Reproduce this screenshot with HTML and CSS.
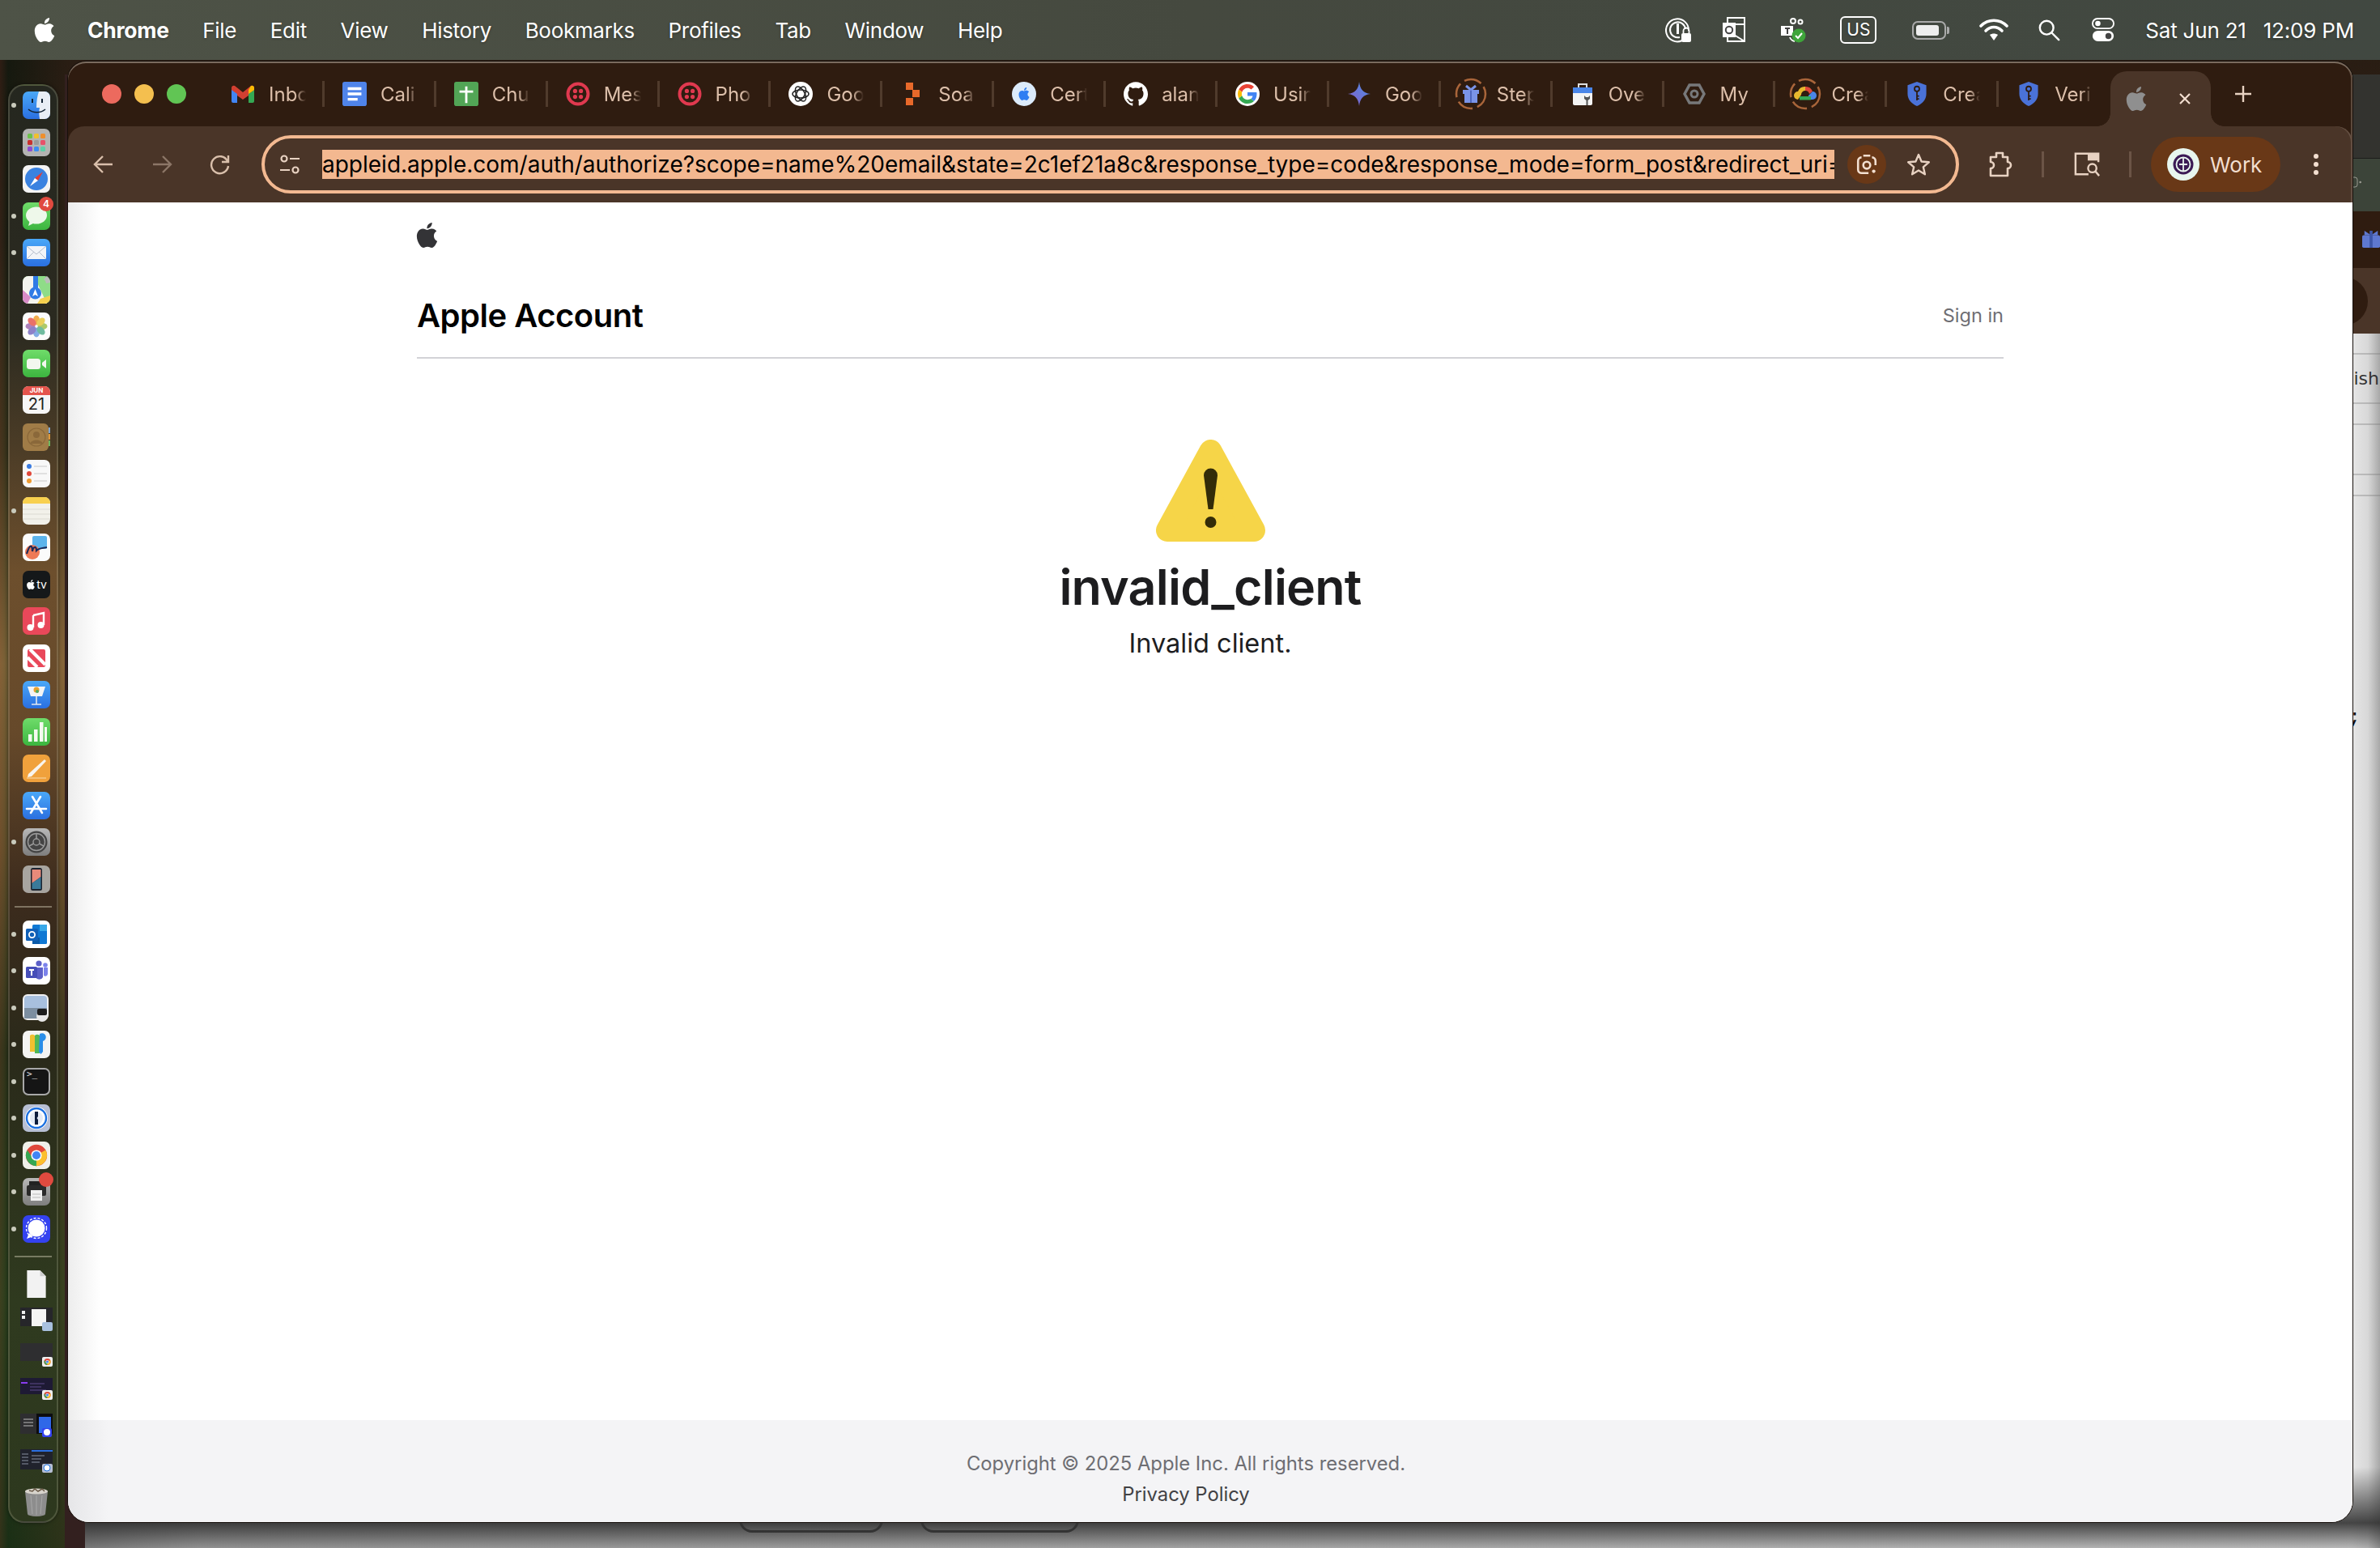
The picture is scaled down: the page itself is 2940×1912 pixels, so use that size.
FILE: index.html
```html
<!DOCTYPE html>
<html lang="en">
<head>
    <meta charset="UTF-8">
    <meta name="viewport" content="width=device-width, initial-scale=1.0">
    <link rel="stylesheet" href="styles.css">
    <title>Apple Account - invalid_client</title>
</head>
<body>

<svg class="defs" width="0" height="0">
    <defs>
        <linearGradient id="blueGrad" x1="0" y1="0" x2="0" y2="1"><stop offset="0" stop-color="#4aa8f8"/><stop offset="1" stop-color="#2a6fe0"/></linearGradient>
        <linearGradient id="greenGrad" x1="0" y1="0" x2="0" y2="1"><stop offset="0" stop-color="#6fdc6a"/><stop offset="1" stop-color="#3cb53f"/></linearGradient>
        <linearGradient id="grayGrad" x1="0" y1="0" x2="0" y2="1"><stop offset="0" stop-color="#b8b8b8"/><stop offset="1" stop-color="#7e7e7e"/></linearGradient>
        <linearGradient id="sparkGrad" x1="0" y1="1" x2="1" y2="0"><stop offset="0" stop-color="#8a5cc8"/><stop offset="1" stop-color="#4a90e8"/></linearGradient>
        <symbol id="apple" viewBox="0 0 24 24"><path d="M12.152 6.896c-.948 0-2.415-1.078-3.96-1.04-2.04.027-3.91 1.183-4.961 3.014-2.117 3.675-.546 9.103 1.519 12.09 1.013 1.454 2.208 3.09 3.792 3.039 1.52-.065 2.09-.987 3.935-.987 1.831 0 2.35.987 3.96.948 1.637-.026 2.676-1.48 3.676-2.948 1.156-1.688 1.636-3.325 1.662-3.415-.039-.013-3.182-1.221-3.22-4.857-.026-3.04 2.48-4.494 2.597-4.559-1.429-2.09-3.623-2.324-4.39-2.376-2-.156-3.675 1.09-4.61 1.09zM15.53 3.83c.843-1.012 1.4-2.427 1.245-3.83-1.207.052-2.662.805-3.532 1.818-.78.896-1.454 2.338-1.273 3.714 1.338.104 2.715-.688 3.559-1.701"/></symbol>
        <symbol id="chromeLogo" viewBox="0 0 34 34"><circle cx="17" cy="17" r="14" fill="#e0483b"/><path d="M17 17 L5 24 A14 14 0 0 0 17 31 Z" fill="#34a853"/><path d="M17 17 L17 31 A14 14 0 0 0 29 10 Z" fill="#fbc02d"/><path d="M17 17 L5 24 A14 14 0 0 1 5 10 L11 19Z" fill="#34a853"/><circle cx="17" cy="17" r="7" fill="#fff"/><circle cx="17" cy="17" r="5.4" fill="#4285f4"/></symbol>
        <symbol id="twilio" viewBox="0 0 30 30"><circle cx="15" cy="15" r="12.5" fill="none" stroke="#e0394f" stroke-width="4"/><g fill="#e0394f"><circle cx="11.4" cy="11.4" r="2.6"/><circle cx="18.6" cy="11.4" r="2.6"/><circle cx="11.4" cy="18.6" r="2.6"/><circle cx="18.6" cy="18.6" r="2.6"/></g></symbol>
        <symbol id="shield" viewBox="0 0 30 36"><path d="M15 1 L28 6 V18 C28 26 22 32 15 35 C8 32 2 26 2 18 V6 Z" fill="#4a72d8"/><circle cx="15" cy="11" r="3.4" fill="none" stroke="#2f1c10" stroke-width="2"/><path d="M15 14 V27 M15 21 h3 M15 25 h3" stroke="#2f1c10" stroke-width="2" fill="none"/></symbol>
        <symbol id="ring" viewBox="0 0 40 40"><circle cx="20" cy="20" r="18" fill="none" stroke="#a9653a" stroke-width="2.6" stroke-dasharray="20 6 20 6 18 6 22 5"/></symbol>
    </defs>
</svg>

<div class="menubar">
    <div class="menu-left">
        <svg class="menu-apple" viewBox="0 0 24 24" fill="#fff"><use href="#apple"/></svg>
        <span class="menu-item app-name">Chrome</span>
        <span class="menu-item">File</span>
        <span class="menu-item">Edit</span>
        <span class="menu-item">View</span>
        <span class="menu-item">History</span>
        <span class="menu-item">Bookmarks</span>
        <span class="menu-item">Profiles</span>
        <span class="menu-item">Tab</span>
        <span class="menu-item">Window</span>
        <span class="menu-item">Help</span>
    </div>
    <div class="menu-right">
        <svg class="extra extra-lock" viewBox="0 0 34 34" fill="none" stroke="#fff" stroke-width="2"><path d="M21 30 A14 14 0 1 1 29 18"/><path d="M18 26 A9.5 9.5 0 1 1 25 16"/><path d="M15.500 9 V22" stroke-width="3"/><rect x="20" y="21" width="12" height="11" rx="2" fill="#fff" stroke="none"/><path d="M22.500 21 v-3 a3.500 3.500 0 0 1 7 0 v3" stroke-width="1.800"/></svg>
        <svg class="extra" viewBox="0 0 34 34" fill="none" stroke="#fff" stroke-width="2"><rect x="9" y="2" width="21" height="29" /><path d="M9 10 h21 M9 18 L30 31"/><rect x="3" y="8" width="16" height="18" fill="#fff" stroke="none"/><circle cx="11" cy="17" r="4.200" stroke="#444"/></svg>
        <svg class="extra extra-teams" viewBox="0 0 34 34"><circle cx="18" cy="6" r="3" fill="none" stroke="#fff" stroke-width="2"/><circle cx="27" cy="7" r="2.500" fill="none" stroke="#fff" stroke-width="2"/><path d="M3 12 H18 V24 H3Z" fill="#fff"/><path d="M8 15 h6 M11 15 v7" stroke="#444" stroke-width="2"/><path d="M14 26 a8 8 0 0 0 6 5" stroke="#fff" stroke-width="2" fill="none"/><circle cx="25" cy="24" r="8.500" fill="#3ea53a"/><path d="M21 24 l3 3 l5-6" stroke="#fff" stroke-width="2" fill="none"/></svg>
        <span class="kbd-box">US</span>
        <div class="battery"><span class="battery-level"></span></div>
        <svg class="extra wifi" viewBox="0 0 36 30" fill="none" stroke="#fff" stroke-width="3.600" stroke-linecap="round"><path d="M2 10 C11 1 25 1 34 10"/><path d="M8 16 C14 10 22 10 28 16"/><path d="M18 28 L13 21 C16 19 20 19 23 21 Z" fill="#fff" stroke="none"/></svg>
        <svg class="extra search" viewBox="0 0 30 30" fill="none" stroke="#fff" stroke-width="2.600"><circle cx="12" cy="12" r="9"/><path d="M19 19 L28 28" stroke-linecap="round"/></svg>
        <svg class="extra control" viewBox="0 0 30 32"><rect x="1" y="1" width="28" height="13" rx="6.500" fill="none" stroke="#fff" stroke-width="2"/><circle cx="8" cy="7.500" r="3.500" fill="#fff"/><rect x="1" y="17" width="28" height="14" rx="7" fill="#fff"/><circle cx="22" cy="24" r="4" fill="#444"/></svg>
        <span class="clock"><span>Sat Jun 21</span><span>12:09 PM</span></span>
    </div>
</div>

<!-- dock -->
<div class="dock">
    <div class="dock-item on"><svg class="app" viewBox="0 0 34 34"><rect width="34" height="34" rx="7" fill="url(#blueGrad)"/><path d="M20 0 H27 A7 7 0 0 1 34 7 V27 A7 7 0 0 1 27 34 H21 C20 28 20 24 21 20 H17 C17 12 18 6 20 0Z" fill="#e9eef5"/><path d="M12 9 v5 M24 9 v5" stroke="#123" stroke-width="2"/><path d="M7 22 C13 27 22 27 28 22" fill="none" stroke="#123" stroke-width="1.500"/></svg></div>
    <div class="dock-item"><svg class="app" viewBox="0 0 34 34"><rect width="34" height="34" rx="7" fill="#b4b4b2"/><rect x="6" y="6" width="6" height="6" rx="1.500" fill="#6cc24a"/><rect x="14" y="6" width="6" height="6" rx="1.500" fill="#f0c02e"/><rect x="22" y="6" width="6" height="6" rx="1.500" fill="#ee8f2e"/><rect x="6" y="14" width="6" height="6" rx="1.500" fill="#c9302c"/><rect x="14" y="14" width="6" height="6" rx="1.500" fill="#9a9a9a"/><rect x="22" y="14" width="6" height="6" rx="1.500" fill="#e8506a"/><rect x="6" y="22" width="6" height="6" rx="1.500" fill="#8c4fd0"/><rect x="14" y="22" width="6" height="6" rx="1.500" fill="#3d8df0"/><rect x="22" y="22" width="6" height="6" rx="1.500" fill="#5ecfa8"/></svg></div>
    <div class="dock-item"><svg class="app" viewBox="0 0 34 34"><rect width="34" height="34" rx="7" fill="#f4f4f4"/><circle cx="17" cy="17" r="14" fill="#3a82e0"/><path d="M25 8 L15 16 L19 19Z" fill="#e63c32"/><path d="M9 26 L15 16 L19 19Z" fill="#fff"/></svg></div>
    <div class="dock-item on"><svg class="app" viewBox="0 0 34 34"><rect width="34" height="34" rx="7" fill="url(#greenGrad)"/><ellipse cx="17" cy="16" rx="13" ry="10.500" fill="#eef8ea"/><path d="M9 22 L7 29 L15 25Z" fill="#eef8ea"/></svg><span class="badge">4</span></div>
    <div class="dock-item on"><svg class="app" viewBox="0 0 34 34"><rect width="34" height="34" rx="7" fill="url(#blueGrad)"/><rect x="5" y="9" width="24" height="16" rx="1.500" fill="#f2f4f8"/><path d="M5 9 L17 19 L29 9 M5 25 L14 16 M29 25 L20 16" fill="none" stroke="#b4bccb" stroke-width="1"/></svg></div>
    <div class="dock-item"><svg class="app" viewBox="0 0 34 34"><rect width="34" height="34" rx="7" fill="#8fdc88"/><path d="M0 7 A7 7 0 0 1 7 0 H14 L30 34 H7 A7 7 0 0 1 0 27Z" fill="#f4f4ee"/><path d="M0 17 L10 26 L6 34 A7 7 0 0 1 0 27Z" fill="#d98bc8"/><path d="M22 28 L34 24 V27 A7 7 0 0 1 27 34 H18Z" fill="#f4cf4e"/><path d="M30 0 A10 10 0 0 1 34 8 L29 9 A6 6 0 0 0 26 4Z" fill="#bbb"/><rect x="13" y="0" width="6" height="18" fill="#2f7be6"/><circle cx="15.500" cy="21" r="7.500" fill="#2f7be6"/><path d="M15.500 16 L19 25 L15.500 23 L12 25Z" fill="#fff"/></svg></div>
    <div class="dock-item"><svg class="app" viewBox="0 0 34 34"><rect width="34" height="34" rx="7" fill="#fbfbfb"/><g opacity=".85"><ellipse cx="17" cy="9.500" rx="4" ry="6" fill="#f0a030"/><ellipse cx="17" cy="24.500" rx="4" ry="6" fill="#6e9fe0"/><ellipse cx="9.500" cy="17" rx="6" ry="4" fill="#a06cb0"/><ellipse cx="24.500" cy="17" rx="6" ry="4" fill="#a0c050"/><ellipse cx="11.500" cy="11.500" rx="4" ry="6" fill="#e85a50" transform="rotate(-45 11.500 11.500)"/><ellipse cx="22.500" cy="11.500" rx="4" ry="6" fill="#e8c840" transform="rotate(45 22.500 11.500)"/><ellipse cx="11.500" cy="22.500" rx="4" ry="6" fill="#7a6cc0" transform="rotate(45 11.500 22.500)"/><ellipse cx="22.500" cy="22.500" rx="4" ry="6" fill="#58b090" transform="rotate(-45 22.500 22.500)"/></g></svg></div>
    <div class="dock-item"><svg class="app" viewBox="0 0 34 34"><rect width="34" height="34" rx="7" fill="url(#greenGrad)"/><rect x="5" y="11" width="17" height="13" rx="3.500" fill="#f2f7ee"/><path d="M24 16 L29 12 V23 L24 19Z" fill="#f2f7ee"/></svg></div>
    <div class="dock-item"><div class="app cal"><span class="cal-month">JUN</span><span class="cal-day">21</span></div></div>
    <div class="dock-item"><svg class="app" viewBox="0 0 34 34"><rect width="32" height="34" rx="6" fill="#a07c47"/><rect x="32" y="5" width="2" height="7" fill="#7aa6d8"/><rect x="32" y="13" width="2" height="7" fill="#e09a3a"/><rect x="32" y="21" width="2" height="7" fill="#70b860"/><circle cx="17" cy="17" r="11" fill="none" stroke="#8a683a" stroke-width="1.200"/><circle cx="17" cy="14" r="4" fill="#8a683a"/><path d="M9 25 C11 19 23 19 25 25" fill="#8a683a"/></svg></div>
    <div class="dock-item"><svg class="app" viewBox="0 0 34 34"><rect width="34" height="34" rx="7" fill="#f8f8f8"/><circle cx="8" cy="8" r="3" fill="#3a7be0"/><circle cx="8" cy="17" r="3" fill="#e0483b"/><circle cx="8" cy="26" r="3" fill="#ee9a30"/><path d="M14 8 H30 M14 17 H30 M14 26 H30" stroke="#c8c8c8" stroke-width="1"/></svg></div>
    <div class="dock-item on notes-dot"><svg class="app" viewBox="0 0 34 34"><rect width="34" height="34" rx="7" fill="#f2f1ea"/><path d="M0 8 A7 7 0 0 1 7 0 H27 A7 7 0 0 1 34 8 Z" fill="#f8d04e"/><path d="M0 15 H34 M0 21 H34 M0 27 H34" stroke="#dcdbd3" stroke-width="1"/></svg></div>
    <div class="dock-item"><svg class="app" viewBox="0 0 34 34"><rect width="34" height="34" rx="7" fill="#fbfbfb"/><rect x="12" y="3" width="18" height="16" rx="2" fill="#5cb4ec"/><circle cx="12" cy="23" r="9" fill="#ee7a56"/><path d="M5 25 C9 12 12 14 12 22 C13 16 17 15 17 21 C20 18 24 18 30 17" fill="none" stroke="#1c2a58" stroke-width="2.200"/></svg></div>
    <div class="dock-item"><div class="app tv"><svg class="tv-logo" viewBox="0 0 24 24" fill="#fff"><use href="#apple"/></svg><span>tv</span></div></div>
    <div class="dock-item"><svg class="app" viewBox="0 0 34 34"><rect width="34" height="34" rx="7" fill="#e9485a"/><path d="M13 10 L26 7 V22" fill="none" stroke="#fff" stroke-width="2.400"/><path d="M13 10 V25" stroke="#fff" stroke-width="2.400"/><circle cx="9.500" cy="25" r="4" fill="#fff"/><circle cx="22.500" cy="22" r="4" fill="#fff"/></svg></div>
    <div class="dock-item"><svg class="app" viewBox="0 0 34 34"><rect width="34" height="34" rx="7" fill="#fff"/><rect x="6" y="6" width="22" height="22" rx="2" fill="#e9485a"/><path d="M9 6 L28 25 M6 16 L18 28" stroke="#fff" stroke-width="4"/></svg></div>
    <div class="dock-item"><svg class="app" viewBox="0 0 34 34"><rect width="34" height="34" rx="7" fill="url(#blueGrad)"/><path d="M6 7 H28 L24 19 H10Z" fill="#f4f4f4"/><circle cx="17" cy="11" r="3.500" fill="#e8a030"/><circle cx="18" cy="13" r="2" fill="#50a860"/><path d="M17 19 V29 M11 29 H23" stroke="#e4e8ee" stroke-width="1.600"/></svg></div>
    <div class="dock-item"><svg class="app" viewBox="0 0 34 34"><rect width="34" height="34" rx="7" fill="url(#greenGrad)"/><rect x="7" y="20" width="4.500" height="9" fill="#f4faf0"/><rect x="14" y="14" width="4.500" height="15" fill="#f4faf0"/><rect x="21" y="5" width="4.500" height="24" fill="#f4faf0"/><rect x="27" y="11" width="3" height="18" fill="#f4faf0"/></svg></div>
    <div class="dock-item"><svg class="app" viewBox="0 0 34 34"><rect width="34" height="34" rx="7" fill="#f0a13c"/><path d="M7 24 L27 6 L29 8 L11 27 L6 28Z" fill="#f8f4ee"/><path d="M5 29 H29" stroke="#f8dcb0" stroke-width="1"/></svg></div>
    <div class="dock-item"><svg class="app" viewBox="0 0 34 34"><rect width="34" height="34" rx="7" fill="url(#blueGrad)"/><path d="M12 6 L24 26 M22 6 L10 26 M5 21 H29" stroke="#fff" stroke-width="2.600" stroke-linecap="round"/></svg></div>
    <div class="dock-item on"><svg class="app" viewBox="0 0 34 34"><rect width="34" height="34" rx="7" fill="url(#grayGrad)"/><circle cx="17" cy="17" r="13.500" fill="#444"/><circle cx="17" cy="17" r="10.500" fill="none" stroke="#9a9a9a" stroke-width="1.400"/><circle cx="17" cy="17" r="4" fill="none" stroke="#9a9a9a" stroke-width="1.400"/><path d="M17 7 V13 M8 22 L13.500 19 M26 22 L20.500 19" stroke="#9a9a9a" stroke-width="1.600"/></svg></div>
    <div class="dock-item"><svg class="app" viewBox="0 0 34 34"><rect width="34" height="34" rx="7" fill="#a8a5a0"/><rect x="10" y="3" width="14" height="28" rx="2.500" fill="#1c2430"/><path d="M11.500 5 H22.500 V14 L11.500 22Z" fill="#e88a7a"/><path d="M22.500 14 V29 H11.500 V22Z" fill="#3a7a9a"/></svg></div>
    <div class="dock-sep"></div>
    <div class="dock-item on"><svg class="app" viewBox="0 0 34 34"><rect width="34" height="34" rx="7" fill="#fff"/><rect x="12" y="5" width="18" height="24" rx="1.500" fill="#0f78d4"/><rect x="21" y="5" width="9" height="8" fill="#38a8e8"/><rect x="12" y="21" width="9" height="8" fill="#0a5aa8"/><rect x="4" y="10" width="15" height="15" rx="1.500" fill="#1060b8"/><circle cx="11.500" cy="17.500" r="3.600" fill="none" stroke="#fff" stroke-width="1.800"/></svg></div>
    <div class="dock-item on"><svg class="app" viewBox="0 0 34 34"><rect width="34" height="34" rx="7" fill="#fff"/><circle cx="20" cy="8" r="3.600" fill="#5b5fc7"/><circle cx="28" cy="10" r="2.800" fill="#7b83eb"/><path d="M16 13 H25 V25 A5 5 0 0 1 16 25Z" fill="#5b5fc7"/><path d="M26 13 H31 V21 A3 3 0 0 1 26 23Z" fill="#7b83eb"/><rect x="4" y="12" width="14" height="14" rx="1.500" fill="#464eb8"/><path d="M8 16 H14 M11 16 V23" stroke="#fff" stroke-width="2"/></svg></div>
    <div class="dock-item on"><svg class="app" viewBox="0 0 34 34"><rect width="32" height="32" rx="6" fill="#f0f0f0"/><rect x="2" y="2" width="28" height="28" rx="4" fill="#a8c0de"/><rect x="2" y="17" width="28" height="13" fill="#7c8ea0"/><circle cx="24" cy="27" r="7" fill="#e8e8e8"/><rect x="18" y="18" width="12" height="8" rx="2" fill="#1c1c1c"/></svg></div>
    <div class="dock-item on"><svg class="app" viewBox="0 0 34 34"><rect width="34" height="34" rx="7" fill="#f4f4f2"/><path d="M9 6 a4 4 0 0 1 6 0 v20 h-6Z" fill="#f0c030"/><path d="M15 6 a4 4 0 0 1 6 0 v22 h-6Z" fill="#50b858"/><path d="M21 4 a5 5 0 1 1 4 9 v13 l-2.500 3 l-2.500 -3Z" fill="#2a8ee8"/></svg></div>
    <div class="dock-item on"><div class="app term"><span>&gt;_</span></div></div>
    <div class="dock-item on"><svg class="app" viewBox="0 0 34 34"><rect width="34" height="34" rx="7" fill="#b7bfd4"/><circle cx="17" cy="17" r="14" fill="#fff"/><circle cx="17" cy="17" r="12" fill="none" stroke="#1a6fe0" stroke-width="2.400"/><circle cx="17" cy="17" r="8" fill="#e4eaf4"/><path d="M15 9 H19 V15 L17.500 17 L19 19 V25 H15Z" fill="#0d1c3a"/></svg></div>
    <div class="dock-item on"><svg class="app" viewBox="0 0 34 34"><rect width="34" height="34" rx="7" fill="#f0f0ea"/><use href="#chromeLogo" x="1" y="1" width="32" height="32"/></svg></div>
    <div class="dock-item on"><svg class="app" viewBox="0 0 34 34"><rect width="34" height="34" rx="7" fill="url(#grayGrad)"/><rect x="8" y="4" width="18" height="6" fill="#222"/><rect x="5" y="9" width="24" height="13" rx="2" fill="#2a2a2a"/><rect x="10" y="15" width="14" height="13" fill="#f0f0f0"/><path d="M12 20 H22 M12 24 H22" stroke="#bbb"/></svg><span class="badge busy"></span></div>
    <div class="dock-item on"><svg class="app" viewBox="0 0 34 34"><rect width="34" height="34" rx="7" fill="#3442f0"/><circle cx="17" cy="16" r="10.500" fill="#fff"/><circle cx="17" cy="16" r="12.500" fill="none" stroke="#fff" stroke-width="1.400" stroke-dasharray="3 2"/><path d="M8 22 L5 29 L13 26Z" fill="#fff"/></svg></div>
    <div class="dock-sep"></div>
    <div class="dock-item"><svg class="app" viewBox="0 0 34 38"><path d="M4 0 H22 L30 8 V38 H4Z" fill="#f2f2f2"/><path d="M22 0 L30 8 H22Z" fill="#cfcfcf"/></svg></div>
    <div class="dock-item thumb"><svg class="app-wide" viewBox="0 0 40 30"><rect width="40" height="23" fill="#26262a"/><rect x="14" y="2" width="18" height="21" fill="#f4f4f4"/><rect x="2" y="4" width="4" height="4" fill="#eee"/><rect x="2" y="10" width="4" height="4" fill="#eee"/><rect x="27" y="18" width="13" height="11" rx="2" fill="#a8c0de"/></svg></div>
    <div class="dock-item thumb"><svg class="app-wide" viewBox="0 0 40 30"><rect width="40" height="22" fill="#2e2e30"/><rect x="27" y="17" width="13" height="12" rx="2" fill="#eee"/><use href="#chromeLogo" x="28" y="18" width="11" height="10"/></svg></div>
    <div class="dock-item thumb"><svg class="app-wide" viewBox="0 0 40 30"><rect width="40" height="20" fill="#1e1a34"/><rect x="1" y="5" width="8" height="2" fill="#8a3cf0"/><path d="M12 7 H30 M12 11 H26 M12 15 H32" stroke="#5c4a8a"/><rect x="27" y="15" width="13" height="12" rx="2" fill="#eee"/><use href="#chromeLogo" x="28" y="16" width="11" height="10"/></svg></div>
    <div class="dock-item thumb"><svg class="app-wide" viewBox="0 0 40 30"><rect width="20" height="25" fill="#2e2e30"/><rect x="20" width="20" height="25" fill="#0d0d10"/><rect x="23" y="4" width="15" height="20" fill="#2f68e8"/><path d="M4 7 H16 M4 11 H16 M4 15 H16" stroke="#bbb"/><rect x="27" y="18" width="12" height="11" rx="2" fill="#3442f0"/><circle cx="33" cy="23" r="4" fill="#fff"/></svg></div>
    <div class="dock-item thumb"><svg class="app-wide" viewBox="0 0 40 30"><rect width="40" height="25" fill="#20222c"/><rect x="14" y="1" width="26" height="2" fill="#2a6fe0"/><path d="M2 6 H10 M2 10 H10 M2 14 H10 M2 18 H10 M14 8 H30 M14 12 H26 M14 16 H24" stroke="#8890a0"/><rect x="27" y="18" width="13" height="11" rx="2" fill="#b7bfd4"/><circle cx="33" cy="23" r="4" fill="#fff" stroke="#1a6fe0"/></svg></div>
    <div class="dock-item"><svg class="app trash" viewBox="0 0 34 36"><path d="M3 5 L6 33 A11 3 0 0 0 28 33 L31 5Z" fill="#8d8d8d"/><ellipse cx="17" cy="5" rx="14" ry="3.500" fill="#d8d4cc"/><path d="M8 4 l4 1 l3-3 l4 3 l5-3 l3 3" stroke="#6a5a48" fill="none" stroke-width="1.500"/><path d="M10 10 L12 33 M17 10 V34 M24 10 L22 33" stroke="#a8a8a8"/></svg></div>
</div>

<!-- the window behind, only its edges show -->
<div class="back-window">
    <div class="back-band back-title"></div>
    <div class="back-band back-menu"><svg class="back-battery" viewBox="0 0 14 14" fill="none" stroke="#9a9a92"><path d="M1 1 H5 A3 3 0 0 1 8 4 V10 A3 3 0 0 1 5 13 H1"/><path d="M11 6 L13 7 L11 8Z" fill="#9a9a92"/></svg></div>
    <div class="back-band back-strip"><svg class="back-gift" viewBox="0 0 24 24" fill="#5e78d0"><rect x="0" y="6" width="24" height="17" rx="2"/><path d="M3 0 L12 6 L21 0 V6 H3Z"/><rect x="10" y="0" width="4" height="23" fill="#3d56a8"/></svg></div>
    <div class="back-band back-toolbar"><span class="back-pill"></span></div>
    <div class="back-page">
        <div class="back-row row-a"></div>
        <div class="back-row row-b">ish</div>
        <div class="back-row row-c"></div>
        <div class="back-row row-d"></div>
        <div class="back-row row-c"></div>
        <div class="back-row row-e">e;</div>
        <div class="back-button button-one"></div>
        <div class="back-button button-two"></div>
    </div>
</div>

<div class="window">
    <div class="tabstrip">
        <div class="lights">
            <span class="light red"></span>
            <span class="light yellow"></span>
            <span class="light green"></span>
        </div>
        <div class="tabs">
            <div class="tab"><svg class="fav" viewBox="0 0 30 24"><path d="M1 4 A3 3 0 0 1 5 2 L15 10 L25 2 A3 3 0 0 1 29 4 V9 L15 19 L1 9Z" fill="#d23f31"/><path d="M1 7 V21 A2 2 0 0 0 3 23 H8 V12Z" fill="#4285f4"/><path d="M29 7 V21 A2 2 0 0 1 27 23 H22 V12Z" fill="#34a853"/><path d="M22 7 L25 2 A3 3 0 0 1 29 4 V7 L22 12Z" fill="#fbbc04"/></svg><span class="tab-label">Inbo</span></div>
            <div class="tab"><svg class="fav" viewBox="0 0 32 32"><rect width="32" height="32" rx="3" fill="#4f84ea"/><path d="M7 9 H25 M7 16 H25 M7 23 H20" stroke="#fff" stroke-width="3.600"/></svg><span class="tab-label">Cali</span></div>
            <div class="tab"><svg class="fav" viewBox="0 0 32 32"><rect width="32" height="32" rx="3" fill="#52a556"/><path d="M16 6 V28 M7 13 H25" stroke="#fff" stroke-width="3"/></svg><span class="tab-label">Chu</span></div>
            <div class="tab"><svg class="fav"><use href="#twilio"/></svg><span class="tab-label">Mes</span></div>
            <div class="tab"><svg class="fav"><use href="#twilio"/></svg><span class="tab-label">Pho</span></div>
            <div class="tab"><svg class="fav" viewBox="0 0 30 30"><circle cx="15" cy="15" r="15" fill="#fff"/><g fill="none" stroke="#222" stroke-width="1.500"><ellipse cx="15" cy="15" rx="10" ry="5"/><ellipse cx="15" cy="15" rx="10" ry="5" transform="rotate(60 15 15)"/><ellipse cx="15" cy="15" rx="10" ry="5" transform="rotate(120 15 15)"/></g></svg><span class="tab-label">Goo</span></div>
            <div class="tab"><svg class="fav" viewBox="0 0 30 30"><g fill="#e8692a"><rect x="7" y="1" width="9" height="9"/><rect x="15" y="10" width="9" height="9"/><rect x="7" y="20" width="9" height="9"/></g></svg><span class="tab-label">Soa</span></div>
            <div class="tab"><svg class="fav" viewBox="0 0 30 30"><circle cx="15" cy="15" r="15" fill="#dcebfb"/><svg x="7" y="6" width="16" height="18" viewBox="0 0 24 24" fill="#2f7ef2"><use href="#apple"/></svg></svg><span class="tab-label">Cert</span></div>
            <div class="tab"><svg class="fav" viewBox="0 0 24 24" fill="#fff"><path d="M12 .297c-6.630 0-12 5.373-12 12 0 5.303 3.438 9.800 8.205 11.385.600.113.820-.258.820-.577 0-.285-.010-1.040-.015-2.040-3.338.724-4.042-1.610-4.042-1.610C4.422 18.070 3.633 17.700 3.633 17.700c-1.087-.744.084-.729.084-.729 1.205.084 1.838 1.236 1.838 1.236 1.070 1.835 2.809 1.305 3.495.998.108-.776.417-1.305.760-1.605-2.665-.300-5.466-1.332-5.466-5.930 0-1.310.465-2.380 1.235-3.220-.135-.303-.540-1.523.105-3.176 0 0 1.005-.322 3.300 1.230.960-.267 1.980-.399 3-.405 1.020.006 2.040.138 3 .405 2.280-1.552 3.285-1.230 3.285-1.230.645 1.653.240 2.873.120 3.176.765.840 1.230 1.910 1.230 3.220 0 4.610-2.805 5.625-5.475 5.920.420.360.810 1.096.810 2.220 0 1.606-.015 2.896-.015 3.286 0 .315.210.690.825.570C20.565 22.092 24 17.592 24 12.297c0-6.627-5.373-12-12-12"/></svg><span class="tab-label">alan</span></div>
            <div class="tab"><svg class="fav" viewBox="-6 -6 60 60"><circle cx="24" cy="24" r="30" fill="#fff"/><path fill="#EA4335" d="M24 9.500c3.540 0 6.710 1.220 9.210 3.600l6.850-6.850C35.900 2.380 30.470 0 24 0 14.620 0 6.510 5.380 2.560 13.220l7.980 6.190C12.430 13.720 17.740 9.500 24 9.500z"/><path fill="#4285F4" d="M46.980 24.550c0-1.570-.150-3.090-.380-4.550H24v9.020h12.940c-.580 2.960-2.260 5.480-4.780 7.180l7.730 6c4.510-4.180 7.090-10.360 7.090-17.650z"/><path fill="#FBBC05" d="M10.530 28.590c-.480-1.450-.760-2.990-.760-4.590s.270-3.140.760-4.590l-7.980-6.190C.920 16.460 0 20.120 0 24c0 3.880.920 7.540 2.560 10.780l7.970-6.190z"/><path fill="#34A853" d="M24 48c6.480 0 11.930-2.130 15.890-5.810l-7.730-6c-2.150 1.450-4.920 2.300-8.160 2.300-6.260 0-11.570-4.220-13.470-9.910l-7.980 6.190C6.510 42.620 14.620 48 24 48z"/></svg><span class="tab-label">Usin</span></div>
            <div class="tab"><svg class="fav" viewBox="0 0 30 30"><path d="M15 0 C16 9 20 14 29 15 C20 16 16 21 15 30 C14 21 10 16 1 15 C10 14 14 9 15 0Z" fill="url(#sparkGrad)"/></svg><span class="tab-label">Goo</span></div>
            <div class="tab"><svg class="fav big" viewBox="0 0 40 40"><use href="#ring"/><path d="M10 15 H30 V20 H10Z M12 20 H28 V31 H12Z" fill="#7a94e8"/><path d="M20 15 V31" stroke="#4f68c0" stroke-width="2"/><path d="M20 15 L14 10 M20 15 L26 10" stroke="#7a94e8" stroke-width="3"/></svg><span class="tab-label">Step</span></div>
            <div class="tab"><svg class="fav" viewBox="0 0 30 30"><path d="M10 7 V3 H20 V7" fill="none" stroke="#ddd" stroke-width="2"/><rect x="3" y="7" width="24" height="22" rx="2" fill="#f4f4f4"/><rect x="3" y="7" width="24" height="7" fill="#4a86e8"/><path d="M17 17 V21 L19.500 23 V29 H21.500 V23 L24 21 V17 L22 19 H19Z" fill="#555"/></svg><span class="tab-label">Ove</span></div>
            <div class="tab"><svg class="fav" viewBox="0 0 30 30" fill="none" stroke="#77787a"><path d="M9 4 H21 L27 15 L21 26 H9 L3 15Z" stroke-width="3.500"/><circle cx="15" cy="15" r="4" stroke-width="3"/></svg><span class="tab-label">My</span></div>
            <div class="tab"><svg class="fav big" viewBox="0 0 40 40"><use href="#ring"/><path d="M11 27 A5 5 0 0 1 11 17 A9 9 0 0 1 20 11 L20 16 A5 5 0 0 0 15 21Z" fill="#e8b82e"/><path d="M20 11 A9 9 0 0 1 29 17 L25 20 A5 5 0 0 0 20 16Z" fill="#e0483b"/><path d="M29 17 A5 5 0 0 1 29 27 H24 V22Z" fill="#4a86e8"/><rect x="13" y="23" width="14" height="4.500" fill="#34a853"/></svg><span class="tab-label">Crea</span></div>
            <div class="tab"><svg class="fav"><use href="#shield"/></svg><span class="tab-label">Crea</span></div>
            <div class="tab last"><svg class="fav"><use href="#shield"/></svg><span class="tab-label">Veri</span></div>
            <div class="tab-active">
                <svg class="fav-apple" viewBox="0 0 24 24" fill="#8f8f8f"><use href="#apple"/></svg>
                <svg class="tab-close" viewBox="0 0 16 16" stroke="#f3dfd0" stroke-width="2.200"><path d="M2 2 L14 14 M14 2 L2 14"/></svg>
            </div>
            <svg class="new-tab" viewBox="0 0 20 20" stroke="#e8d2c2" stroke-width="2.400"><path d="M10 0 V20 M0 10 H20"/></svg>
        </div>
    </div>

    <div class="toolbar">
        <svg class="tool-btn" viewBox="0 0 26 26" fill="none" stroke="#d9bfab" stroke-width="2.400"><path d="M24 13 H3 M12 3 L2 13 L12 23"/></svg>
        <svg class="tool-btn" viewBox="0 0 26 26" fill="none" stroke="#8c7667" stroke-width="2.400"><path d="M2 13 H23 M14 3 L24 13 L14 23"/></svg>
        <svg class="tool-btn" viewBox="0 0 26 26" fill="none" stroke="#d9bfab" stroke-width="2.400"><path d="M22 9 A10.500 10.500 0 1 0 23 15"/><path d="M23 2 V10 H15" /></svg>
        <div class="omnibox">
            <svg class="tune" viewBox="0 0 26 26" fill="none" stroke="#e8d2c2" stroke-width="2.200"><circle cx="6" cy="6" r="3.500"/><path d="M13 6 H25 M1 20 H13"/><circle cx="20" cy="20" r="3.500"/></svg>
            <div class="url"><span class="url-text">appleid.apple.com/auth/authorize?scope=name%20email&amp;state=2c1ef21a8c&amp;response_type=code&amp;response_mode=form_post&amp;redirect_uri=https</span></div>
            <div class="lens"><svg viewBox="0 0 26 26" fill="none" stroke="#f3dfd0" stroke-width="2.400"><path d="M9 3 H17 M3 9 V19 A4 4 0 0 0 7 23 H15 M23 9 V14 M3 9 A4 4 0 0 1 7 5 M23 9 A4 4 0 0 0 19 5"/><circle cx="13" cy="14" r="4"/><circle cx="21" cy="21" r="2" fill="#f3dfd0" stroke="none"/></svg></div>
            <svg class="star" viewBox="0 0 30 30" fill="none" stroke="#e8d2c2" stroke-width="2.400" stroke-linejoin="round"><path d="M15 3 L18.600 11.500 L27.800 12.300 L20.800 18.300 L22.900 27.300 L15 22.500 L7.100 27.300 L9.200 18.300 L2.200 12.300 L11.400 11.500Z"/></svg>
        </div>
        <svg class="ext" viewBox="0 0 30 32" fill="none" stroke="#e8d2c2" stroke-width="2.600" stroke-linejoin="round"><path d="M3 7 H10 V2 H18 V7 H24 V13 A3.500 3.500 0 0 1 24 21 V30 H3 V21 A3.500 3.500 0 0 0 3 13Z"/></svg>
        <span class="tool-sep"></span>
        <svg class="panel" viewBox="0 0 36 34" fill="none" stroke="#e8d2c2" stroke-width="2.600"><path d="M20 30 H3 V3 H33 V14"/><rect x="19" y="3" width="14" height="9" fill="#e8d2c2" stroke="none"/><circle cx="25" cy="22" r="5.500"/><path d="M29 26 L34 32"/></svg>
        <span class="tool-sep second"></span>
        <div class="profile">
            <svg class="avatar" viewBox="0 0 40 40"><circle cx="20" cy="20" r="20" fill="#e8f6ee"/><circle cx="20" cy="20" r="12.500" fill="#3b1a55"/><circle cx="20" cy="20" r="8.500" fill="none" stroke="#e8f6ee" stroke-width="1.800"/><path d="M20 11 V29 M15 20 H25" stroke="#e8f6ee" stroke-width="1.800"/></svg>
            <span class="profile-name">Work</span>
        </div>
        <div class="kebab"><span></span><span></span><span></span></div>
    </div>

    <div class="page">
        <div class="page-main">
            <div class="container">
                <svg class="logo" viewBox="0 0 24 24" fill="#333336"><use href="#apple"/></svg>
                <div class="localnav">
                    <span class="nav-title">Apple Account</span>
                    <a class="nav-link">Sign in</a>
                </div>
                <div class="message">
                    <svg class="warning" viewBox="0 0 135 126">
                        <path d="M67.500 14 L14 112 H121Z" fill="#f6d548" stroke="#f6d548" stroke-width="28" stroke-linejoin="round"/>
                        <path d="M59 44 A8.500 8.500 0 0 1 76 44 L70.500 86 H64.500Z" fill="#332c08"/>
                        <circle cx="67.500" cy="102" r="7" fill="#332c08"/>
                    </svg>
                    <h1 class="error-title">invalid_client</h1>
                    <p class="error-text">Invalid client.</p>
                </div>
            </div>
        </div>
        <div class="page-footer">
            <p class="copyright">Copyright © 2025 Apple Inc. All rights reserved.</p>
            <a class="privacy">Privacy Policy</a>
        </div>
    </div>
</div>

</body>
</html>
```

FILE: styles.css
```css
html, body {
    margin: 0;
    height: 100%;
}

body {
    position: relative;
    width: 2940px;
    height: 1912px;
    overflow: hidden;
    font-family: Inter, "Liberation Sans", sans-serif;
    background:
        linear-gradient(90deg, rgba(120, 40, 30, 0.25), rgba(20, 20, 10, 0.2) 10px, rgba(120, 40, 30, 0.2) 84px),
        linear-gradient(180deg, #14180f 0, #1b2014 300px, #3a3a1e 560px, #8a7440 820px, #6b5b30 1050px, #2c3a1c 1300px, #2a4820 1600px, #1c3518 1912px);
}

.defs {
    position: absolute;
}

/* menu bar */

.menubar {
    position: relative;
    z-index: 5;
    display: flex;
    align-items: center;
    justify-content: space-between;
    height: 74px;
    background: linear-gradient(90deg, #4e5347, #45493f 50%, #414841);
    color: #fff;
    font-size: 26px;
    text-shadow: 0 1px 3px rgba(0, 0, 0, 0.35);
}

.menu-left {
    display: flex;
    align-items: center;
    padding-left: 40px;
}

.menu-apple {
    width: 30px;
    height: 34px;
    margin-right: 38px;
}

.menu-item {
    margin-right: 41.6px;
    letter-spacing: -0.3px;
}

.app-name {
    font-size: 26.5px;
    font-weight: 700;
}

.menu-right {
    display: flex;
    align-items: center;
    padding-right: 32px;
}

.extra {
    flex: none;
    width: 34px;
    height: 34px;
    margin-right: 38px;
}

.extra-lock {
    margin-right: 34px;
}

.extra-teams {
    margin-right: 42px;
}

.kbd-box {
    width: 41px;
    height: 30px;
    margin-right: 44px;
    border: 2px solid #fff;
    border-radius: 6px;
    font-size: 21px;
    line-height: 30px;
    text-align: center;
}

.battery {
    position: relative;
    width: 42px;
    height: 23px;
    margin-right: 41px;
    padding: 3px;
    border: 2px solid #aaa;
    border-radius: 7px;
    box-sizing: border-box;
}

.battery::after {
    content: "";
    position: absolute;
    right: -6px;
    top: 5px;
    width: 3px;
    height: 9px;
    border-radius: 0 2px 2px 0;
    background: #aaa;
}

.battery-level {
    display: block;
    width: 28px;
    height: 13px;
    background: #eee;
    border-radius: 3px;
}

.wifi {
    width: 36px;
    height: 30px;
    margin-right: 36px;
}

.search {
    width: 28px;
    height: 28px;
    margin-right: 39px;
}

.control {
    width: 28px;
    height: 32px;
    margin-right: 38px;
}

.clock {
    display: flex;
    gap: 21px;
    letter-spacing: -0.2px;
    white-space: nowrap;
}

/* dock */

.dock {
    position: absolute;
    z-index: 3;
    left: 10px;
    top: 104px;
    display: flex;
    flex-direction: column;
    width: 62px;
    height: 1777px;
    padding-top: 7px;
    box-sizing: border-box;
    border: 2px solid rgba(200, 200, 170, 0.22);
    border-radius: 20px;
    background: linear-gradient(180deg, #25271f 0, #2b2a20 300px, #6d4f2d 600px, #66492a 800px, #3c2b1d 1000px, #2a2a1a 1200px, #2f3a1f 1500px, #2d381e 1777px);
    box-shadow: 0 0 4px rgba(0, 0, 0, 0.5);
}

.dock-item {
    position: relative;
    display: flex;
    justify-content: flex-start;
    height: 34px;
    margin-bottom: 11.5px;
    padding-left: 16px;
}

.dock-item.on::before {
    content: "";
    position: absolute;
    left: 2px;
    top: 14px;
    width: 6px;
    height: 6px;
    border-radius: 50%;
    background: #c9cabc;
}

.app {
    flex: none;
    display: block;
    width: 34px;
    height: 34px;
}

.trash {
    height: 38px;
    margin-top: 2px;
}

.thumb {
    height: 32px;
    margin-bottom: 12.8px;
    padding-left: 13px;
}

.app-wide {
    width: 40px;
    height: 30px;
}

.badge {
    position: absolute;
    right: 4px;
    top: -7px;
    width: 18px;
    height: 18px;
    border-radius: 50%;
    background: #e04a3f;
    color: #fff;
    font-size: 12px;
    font-weight: 600;
    line-height: 18px;
    text-align: center;
}

.dock-sep {
    height: 2px;
    margin: 5px 6px 16px;
    background: rgba(230, 225, 200, 0.4);
}

.cal {
    overflow: hidden;
    border-radius: 7px;
    background: #f6f6f6;
    text-align: center;
}

.cal-month {
    display: block;
    height: 11px;
    background: #e4544c;
    color: #fff;
    font-size: 8px;
    font-weight: 700;
    line-height: 11px;
}

.cal-day {
    display: block;
    color: #222;
    font-size: 20px;
    line-height: 22px;
}

.tv {
    display: flex;
    align-items: center;
    justify-content: center;
    gap: 1px;
    border-radius: 7px;
    background: #15181a;
    color: #fff;
    font-size: 14px;
}

.tv-logo {
    width: 12px;
    height: 12px;
}

.term {
    box-sizing: border-box;
    border: 2px solid #a8a8a8;
    border-radius: 7px;
    background: #151515;
    color: #e8e8e8;
    font-family: "DejaVu Sans Mono", monospace;
    font-size: 11px;
    line-height: 12px;
    padding-left: 3px;
}

/* window behind */

.back-window {
    position: absolute;
    left: 80px;
    top: 92px;
    right: 0;
    bottom: 0;
    display: flex;
    flex-direction: column;
    background: #33201f;
}

.back-band {
    position: relative;
    margin-left: 25px;
}

.back-title {
    height: 103px;
    background: #33332f;
    border-bottom: 1px solid #1c1c1a;
}

.back-menu {
    height: 65px;
    background: #3c4439;
}

.back-battery {
    position: absolute;
    right: 22px;
    top: 22px;
    width: 14px;
    height: 14px;
}

.back-strip {
    height: 70px;
    background: #2f1c10;
}

.back-gift {
    position: absolute;
    right: 0;
    top: 24px;
    width: 22px;
    height: 22px;
}

.back-toolbar {
    height: 81px;
    background: #4a3528;
}

.back-pill {
    position: absolute;
    right: 15px;
    top: 11px;
    width: 90px;
    height: 60px;
    border-radius: 30px;
    background: #2f1c10;
}

.back-page {
    position: relative;
    flex: 1;
    margin-left: 25px;
    color: #333;
    font-family: "DejaVu Sans", sans-serif;
    font-size: 22px;
    text-align: right;
    background:
        linear-gradient(180deg, transparent 1400px, rgba(40, 40, 40, 0.85) 1469px, rgba(60, 60, 60, 0.25) 1501px),
        linear-gradient(90deg, #8e8e8e, #b0b0b0 140px, #e6e6e6 2800px, #d8d8d8 2820px, #a8a8a8 2835px);
}

.back-row {
    border-bottom: 2px solid rgba(120, 120, 120, 0.35);
}

.row-a {
    height: 24px;
}

.row-b {
    height: 59px;
    padding-right: 1px;
    line-height: 59px;
}

.row-c {
    height: 24px;
}

.row-d {
    height: 60px;
}

.row-e {
    height: 80px;
    padding-top: 260px;
    padding-right: 24px;
    border: 0;
    color: #111;
    font-family: "Liberation Mono", monospace;
    font-size: 24px;
}

.back-button {
    position: absolute;
    top: 1459px;
    height: 16px;
    border: 3px solid #333;
    border-radius: 0 0 16px 16px;
}

.button-one {
    left: 808px;
    width: 172px;
}

.button-two {
    left: 1032px;
    width: 190px;
}

/* front window */

.window {
    position: absolute;
    z-index: 2;
    left: 84px;
    top: 76px;
    display: flex;
    flex-direction: column;
    width: 2822px;
    height: 1804px;
    overflow: hidden;
    border-radius: 22px 22px 26px 26px;
    background: #2f1c10;
    box-shadow: 0 0 0 1px #17100c, inset 0 2px 0 #7a6b5e, inset -2px 0 0 rgba(140, 120, 105, 0.5);
}

.tabstrip {
    display: flex;
    align-items: center;
    flex: none;
    height: 80px;
}

.lights {
    display: flex;
    gap: 16px;
    width: 179px;
    padding-left: 42px;
    box-sizing: border-box;
}

.light {
    width: 24px;
    height: 24px;
    border-radius: 50%;
}

.red {
    background: #ec6a5e;
}

.yellow {
    background: #f4bf4f;
}

.green {
    background: #61c554;
}

.tabs {
    display: flex;
    align-items: center;
    height: 100%;
}

.tab {
    display: flex;
    align-items: center;
    width: 137.9px;
    height: 32px;
    padding-left: 22px;
    box-sizing: border-box;
    border-right: 3px solid #503b2c;
}

.tab.last {
    border-right: 0;
}

.fav {
    flex: none;
    width: 30px;
    height: 32px;
}

.fav.big {
    width: 40px;
    height: 40px;
    margin: -4px -5px;
}

.tab-label {
    flex: none;
    width: 46px;
    margin-left: 17px;
    color: #dcbfaa;
    font-size: 24px;
    white-space: nowrap;
    -webkit-mask-image: linear-gradient(90deg, #000 70%, transparent);
    mask-image: linear-gradient(90deg, #000 70%, transparent);
}

.tab-active {
    position: relative;
    display: flex;
    align-items: center;
    align-self: flex-end;
    width: 124px;
    height: 68px;
    border-radius: 20px 20px 0 0;
    background: #4a3528;
}

.tab-active::before,
.tab-active::after {
    content: "";
    position: absolute;
    bottom: 0;
    width: 16px;
    height: 16px;
}

.tab-active::before {
    left: -16px;
    background: radial-gradient(circle at 0 0, transparent 15.5px, #4a3528 16px);
}

.tab-active::after {
    right: -16px;
    background: radial-gradient(circle at 100% 0, transparent 15.5px, #4a3528 16px);
}

.fav-apple {
    width: 30px;
    height: 36px;
    margin-left: 17px;
}

.tab-close {
    width: 16px;
    height: 16px;
    margin-left: 37px;
}

.new-tab {
    width: 20px;
    height: 20px;
    margin-left: 30px;
}

/* toolbar */

.toolbar {
    display: flex;
    align-items: center;
    flex: none;
    height: 94px;
    padding-left: 8px;
    box-sizing: border-box;
    border-radius: 20px 20px 0 0;
    background: #4a3528;
    box-shadow: inset -2px 0 0 rgba(140, 120, 105, 0.4);
}

.tool-btn {
    flex: none;
    width: 26px;
    height: 26px;
    padding: 0 23px;
}

.omnibox {
    display: flex;
    align-items: center;
    flex: none;
    width: 2097px;
    height: 72px;
    margin-left: 15px;
    box-sizing: border-box;
    border: 4px solid #f3b991;
    border-radius: 36px;
}

.tune {
    flex: none;
    width: 26px;
    height: 26px;
    margin-left: 18px;
}

.url {
    flex: none;
    width: 1868px;
    height: 36px;
    margin-left: 27px;
    overflow: hidden;
    white-space: nowrap;
    background: #f3b890;
    color: #000;
    font-size: 28px;
    line-height: 36px;
}

.lens {
    display: flex;
    align-items: center;
    justify-content: center;
    flex: none;
    width: 48px;
    height: 48px;
    margin-left: 16px;
    border-radius: 50%;
    background: #693817;
}

.lens svg {
    width: 28px;
    height: 28px;
}

.star {
    flex: none;
    width: 30px;
    height: 30px;
    margin-left: 25px;
}

.ext {
    flex: none;
    width: 30px;
    height: 32px;
    margin-left: 36px;
}

.tool-sep {
    flex: none;
    width: 3px;
    height: 32px;
    margin: 0 36px 0 36px;
    background: #6b5446;
}

.tool-sep.second {
    margin: 0 24px 0 35px;
}

.panel {
    flex: none;
    width: 34px;
    height: 32px;
}

.profile {
    display: flex;
    align-items: center;
    flex: none;
    width: 160px;
    height: 68px;
    box-sizing: border-box;
    padding-left: 20px;
    border-radius: 34px;
    background: #693817;
    color: #f3dfd0;
    font-size: 26px;
}

.avatar {
    width: 40px;
    height: 40px;
    margin-right: 13px;
}

.kebab {
    display: flex;
    flex-direction: column;
    gap: 4px;
    margin-left: 41px;
}

.kebab span {
    width: 6px;
    height: 6px;
    border-radius: 50%;
    background: #f3dfd0;
}

/* page */

.page {
    display: flex;
    flex-direction: column;
    flex: 1;
    background: #fff;
}

.page-main {
    flex: 1;
    background: linear-gradient(90deg, #ededed, #fff 40px);
}

.container {
    width: 1960px;
    margin: 0 auto;
}

.logo {
    display: block;
    width: 31px;
    height: 31px;
    margin-left: -3px;
    padding-top: 25px;
}

.localnav {
    display: flex;
    align-items: center;
    justify-content: space-between;
    height: 137px;
    padding-top: 31px;
    border-bottom: 2px solid #d2d2d7;
    box-sizing: border-box;
}

.nav-title {
    color: #000;
    font-size: 40px;
    font-weight: 600;
    letter-spacing: -0.5px;
}

.nav-link {
    color: #6e6e73;
    font-size: 23.5px;
}

.message {
    display: flex;
    flex-direction: column;
    align-items: center;
    padding-top: 100px;
}

.warning {
    display: block;
    width: 135px;
    height: 126px;
}

.error-title {
    margin: 20px 0 0;
    color: #1d1d1f;
    font-size: 61px;
    font-weight: 600;
    line-height: 72px;
    letter-spacing: -0.8px;
}

.error-text {
    margin: 12px 0 0;
    color: #1d1d1f;
    font-size: 32.5px;
    line-height: 44px;
}

.page-footer {
    flex: none;
    height: 126px;
    padding: 35px 60px 0 0;
    box-sizing: border-box;
    background: linear-gradient(90deg, #e6e6e8, #f4f4f6 50px);
    font-size: 23.8px;
    line-height: 38px;
    text-align: center;
}

.copyright {
    margin: 0;
    color: #6e6e73;
}

.privacy {
    color: #424245;
}
```
